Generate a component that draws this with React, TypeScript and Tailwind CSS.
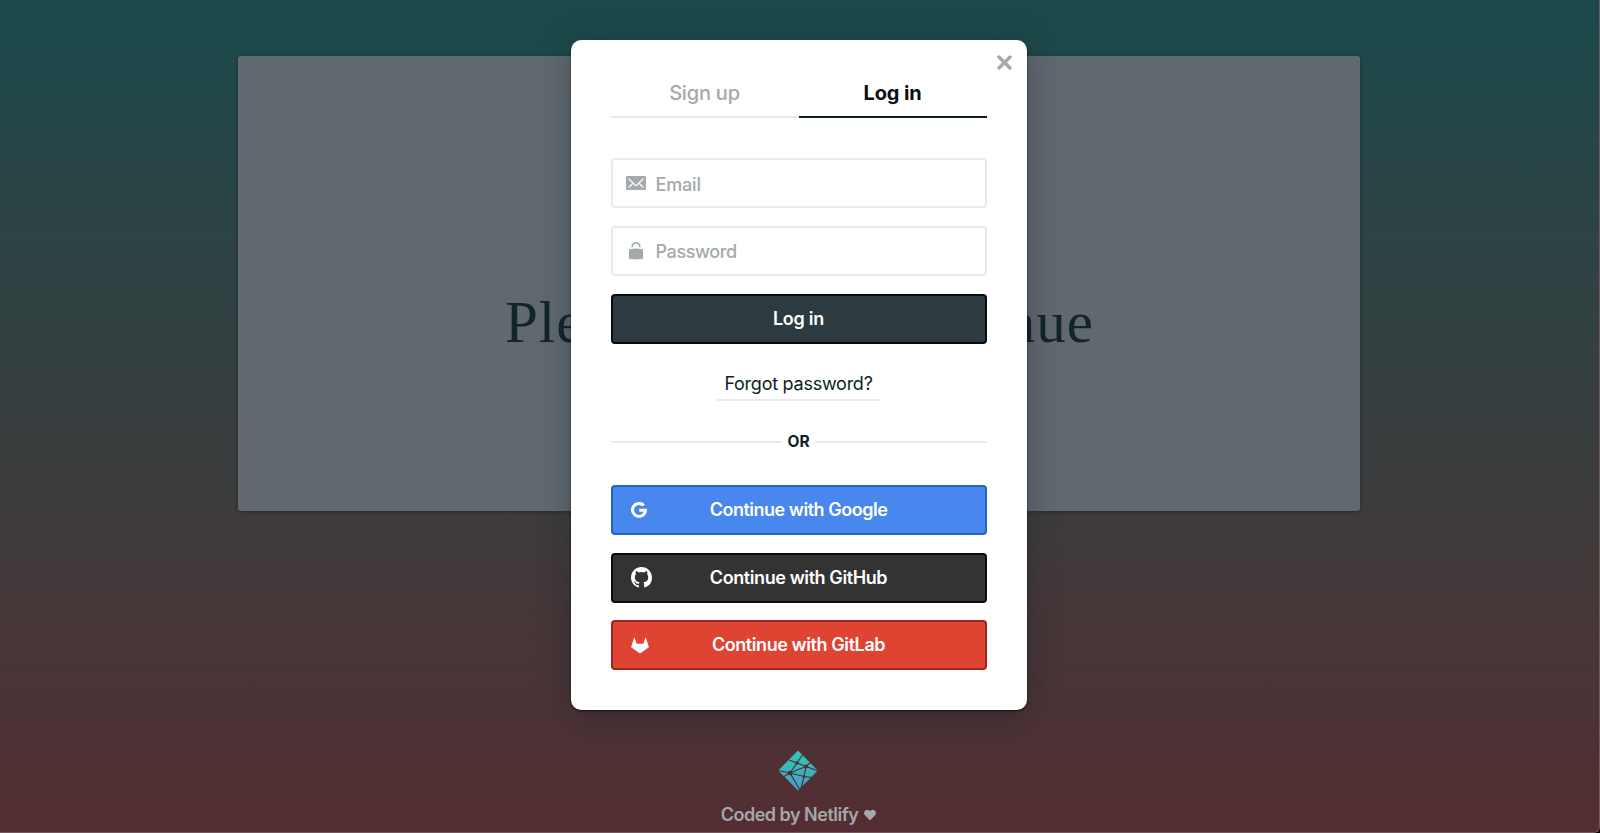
import { FaHeart } from 'react-icons/fa';

const providers = [
  { name: 'Google', box: 'bg-[#4787ee] border-[#1f67bf] tracking-[-0.48px]' },
  { name: 'GitHub', box: 'bg-[#333333] border-[#0c0c0c] tracking-[-0.41px]' },
  { name: 'GitLab', box: 'bg-[#df4331] border-[#a4241a] tracking-[-0.42px]' },
];

function ProviderIcon({ name }: { name: string }) {
  if (name === 'Google') {
    return (
      <svg className="ml-[18px] size-4" viewBox="0 0 16 16" fill="none" stroke="currentColor" strokeWidth="3">
        <path d="M12.800 3.500A6.500 6.500 0 1 0 14.500 8.200H8.200" />
      </svg>
    );
  }
  if (name === 'GitHub') {
    return (
      <svg className="ml-[18px] h-[21px] w-[21px]" viewBox="0 0 16 16" fill="currentColor">
        <path d="M8 0C3.58 0 0 3.58 0 8c0 3.54 2.29 6.53 5.47 7.59.4.07.55-.17.55-.38 0-.19-.01-.82-.01-1.49-2.01.37-2.53-.49-2.69-.94-.09-.23-.48-.94-.82-1.13-.28-.15-.68-.52-.01-.53.63-.01 1.08.58 1.23.82.72 1.21 1.87.87 2.33.66.07-.52.28-.87.51-1.07-1.78-.2-3.64-.89-3.64-3.95 0-.87.31-1.59.82-2.15-.08-.2-.36-1.02.08-2.12 0 0 .67-.21 2.2.82a7.6 7.6 0 0 1 4 0c1.53-1.04 2.2-.82 2.2-.82.44 1.1.16 1.92.08 2.12.51.56.82 1.27.82 2.15 0 3.07-1.87 3.75-3.65 3.95.29.25.54.73.54 1.48 0 1.07-.01 1.93-.01 2.2 0 .21.15.46.55.38A8.01 8.01 0 0 0 16 8c0-4.42-3.58-8-8-8z" />
      </svg>
    );
  }
  return (
    <svg className="ml-[18px] h-[17px] w-[18px]" viewBox="0 0 19 17" fill="currentColor">
      <path d="M9.5 17 .5 10.6a.8.8 0 0 1-.3-.9L3.2.4q.3-.8.6 0L6 6.6h7L15.200.4q.3-.8.6 0l3 9.300a.8.8 0 0 1-.3.900z" />
    </svg>
  );
}

function NetlifyMark() {
  return (
    <svg className="h-[41px] w-10" viewBox="0 0 40 41">
      <defs>
        <linearGradient id="mark" x1="0" y1="0" x2="0" y2="1">
          <stop offset="0" stopColor="#30c8b9" />
          <stop offset="1" stopColor="#4a9cc4" />
        </linearGradient>
      </defs>
      <path d="M20 .5 39.800 20.500 20 40.500.2 20.500z" fill="url(#mark)" />
      <g stroke="#4f2e31" strokeWidth="1.2" fill="none">
        <path d="M11 10 19 13 28 16.500 40 21M25 4 19 13 12 23M28 16.500 12 23 0 20.500M28 16.500 33 12M28 16.500 26 26.500 23 39M12 23 26 26.500 34 27.500M12 23 22 40M12 23 5 27" />
      </g>
      <g fill="#4f2e31">
        <circle cx="19" cy="13" r="1.700" />
        <circle cx="28" cy="16.500" r="1.900" />
        <circle cx="12" cy="23" r="2.300" />
        <circle cx="26" cy="26.500" r="1.500" />
      </g>
    </svg>
  );
}

export default function App() {
  return (
    <div className="relative h-[833px] w-[1600px] overflow-hidden bg-black font-['Inter',sans-serif] text-[18px] leading-6 antialiased">
      <div className="flex h-[833px] w-[1600px] flex-col items-center rounded-br-md border-r border-b border-[#72595c] bg-linear-to-b from-[#1b494b] from-3% via-[#3b3c3d] via-58% to-[#532d31] pt-14 pr-px">
        <div className="flex h-[455px] w-[1122px] items-center justify-center rounded-[3px] bg-[#61696f] shadow-[0_1px_4px_rgba(14,30,37,0.5)]">
          <h1 className="pt-[77px] pl-px font-['Liberation_Serif',serif] text-[59px] leading-[68px] tracking-[1px] [word-spacing:-4px] whitespace-nowrap text-[#14242b]">
            Please log in to continue
          </h1>
        </div>
      </div>

      <div className="absolute inset-0 flex flex-col items-center pt-10 pr-[3px]">
        <div className="relative flex h-[670px] w-[456px] shrink-0 flex-col rounded-[10px] bg-white px-10 pt-[37px] shadow-[0_1px_2px_rgba(0,0,0,0.7),0_6px_32px_rgba(14,30,37,0.35)]">
          <button className="absolute top-[15px] right-[15px] text-[#a3a9ac]" aria-label="Close">
            <svg className="size-[15px]" viewBox="0 0 15 15" stroke="currentColor" strokeWidth="3.400" strokeLinecap="round">
              <path d="M2 2 13 13M13 2 2 13" />
            </svg>
          </button>

          <div className="flex text-[20px]">
            <button className="h-[41px] flex-1 border-b-2 border-[#e9ebeb] pt-0.5 pb-[9px] font-medium tracking-[-0.2px] text-[#a3a9ac]">
              Sign up
            </button>
            <button className="h-[41px] flex-1 border-b-2 border-[#0e1e25] pt-0.5 pb-[9px] font-bold tracking-[-0.15px] text-[#0a0f12]">
              Log in
            </button>
          </div>

          <div className="mt-10 flex flex-col gap-[18px] font-medium text-[#a3a9ac]">
            <label className="flex h-[50px] items-center rounded border-2 border-[#e9ebeb] pl-[13px]">
              <svg className="mr-[10px] h-[14px] w-5" viewBox="0 0 20 14">
                <rect width="20" height="14" rx="1" fill="currentColor" />
                <path d="M2.500 2.500 9 9q1 .8 2 0L17.500 2.500M2.500 11.500 6.500 7.800M17.500 11.500 13.500 7.800" fill="none" stroke="#fff" strokeWidth="1.200" />
              </svg>
              <span className="pt-[3px] tracking-[-0.15px]">Email</span>
            </label>
            <label className="flex h-[50px] items-center rounded border-2 border-[#e9ebeb] pl-4">
              <svg className="mr-[13px] h-[18px] w-[14px]" viewBox="0 0 14 18">
                <path d="M3.200 5.200V4.500a3.800 3.800 0 0 1 7.600 0V5.200" fill="none" stroke="currentColor" strokeWidth="1.600" />
                <path d="M0 8.200Q0 7.200 1 7 7 6.200 13 7q1 .2 1 1.200v7.600q0 1-1 1.200-6 .9-12 0-1-.2-1-1.200z" fill="currentColor" />
              </svg>
              <span className="pt-[2px] tracking-[-0.4px]">Password</span>
            </label>
            <button className="h-[50px] rounded border-2 border-[#050d11] bg-[#2d3b41] font-semibold tracking-[-0.25px] text-white">
              Log in
            </button>
          </div>

          <div className="mt-[27px] flex justify-center">
            <button className="h-[30px] w-[163px] border-b-2 border-[#e9ebeb] pb-[3px] tracking-[-0.25px] whitespace-nowrap text-[#0e1e25]">
              Forgot password?
            </button>
          </div>

          <div className="mt-[29px] flex items-center gap-[5px] text-[15.500px] font-bold text-[#0e1e25]">
            <span className="h-[2px] flex-1 bg-[#e9ebeb]" />
            OR
            <span className="h-[2px] flex-1 bg-[#e9ebeb]" />
          </div>

          <div className="mt-[31px] flex flex-col gap-[17.500px] font-semibold text-white">
            {providers.map((p) => (
              <button key={p.name} className={`relative flex h-[50px] items-center justify-center rounded border-2 ${p.box}`}>
                <span className="absolute left-0 flex items-center">
                  <ProviderIcon name={p.name} />
                </span>
                Continue with {p.name}
              </button>
            ))}
          </div>
        </div>

        <div className="mt-10 flex flex-col items-center text-[#a6a7aa]">
          <NetlifyMark />
          <div className="mt-3 flex items-center gap-[6px] font-semibold tracking-[-0.5px]">
            Coded by Netlify
            <FaHeart className="size-3" />
          </div>
        </div>
      </div>
    </div>
  );
}
